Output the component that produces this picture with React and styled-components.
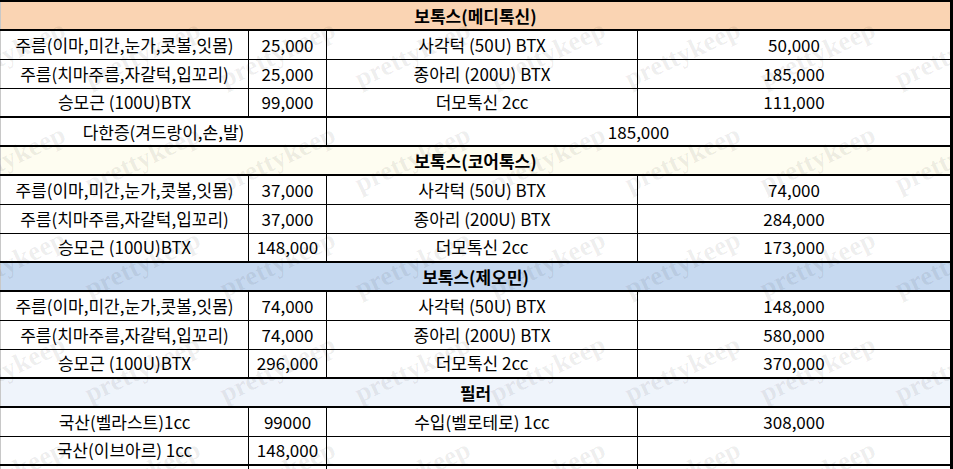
import styled, { createGlobalStyle } from "styled-components";

const GlobalStyle = createGlobalStyle`
  html, body { margin: 0; padding: 0; background: #fff; }
  body { font-family: "Noto Sans CJK KR", "Noto Sans", sans-serif; }
`;

const sections = [
  {
    title: "보톡스(메디톡신)",
    bg: "#fad4b3",
    rows: [
      ["주름(이마,미간,눈가,콧볼,잇몸)", "25,000", "사각턱 (50U) BTX", "50,000"],
      ["주름(치마주름,자갈턱,입꼬리)", "25,000", "종아리 (200U) BTX", "185,000"],
      ["승모근 (100U)BTX", "99,000", "더모톡신 2cc", "111,000"],
    ],
    extra: ["다한증(겨드랑이,손,발)", "185,000"],
  },
  {
    title: "보톡스(코어톡스)",
    bg: "#fefdf1",
    rows: [
      ["주름(이마,미간,눈가,콧볼,잇몸)", "37,000", "사각턱 (50U) BTX", "74,000"],
      ["주름(치마주름,자갈턱,입꼬리)", "37,000", "종아리 (200U) BTX", "284,000"],
      ["승모근 (100U)BTX", "148,000", "더모톡신 2cc", "173,000"],
    ],
  },
  {
    title: "보톡스(제오민)",
    bg: "#c6d9f0",
    rows: [
      ["주름(이마,미간,눈가,콧볼,잇몸)", "74,000", "사각턱 (50U) BTX", "148,000"],
      ["주름(치마주름,자갈턱,입꼬리)", "74,000", "종아리 (200U) BTX", "580,000"],
      ["승모근 (100U)BTX", "296,000", "더모톡신 2cc", "370,000"],
    ],
  },
  {
    title: "필러",
    bg: "#eff4fb",
    rows: [
      ["국산(벨라스트)1cc", "99000", "수입(벨로테로) 1cc", "308,000"],
      ["국산(이브아르) 1cc", "148,000", "", ""],
    ],
  },
];

// watermark grid: 135px across, 105px down
const marks = [];
for (let j = 0; j < 5; j++) {
  for (let i = -1; i < 8; i++) {
    marks.push({ x: i * 135 + 90, y: j * 105 + 88 });
  }
}

const Page = styled.div`
  position: relative;
  width: 953px;
  height: 469px;
  overflow: hidden;
  background: #fff;
`;

const Sheet = styled.table`
  border-collapse: collapse;
  table-layout: fixed;
  width: 951px;
  font-size: 17px;
  color: #000;
  border-top: 2px solid #000;
  border-left: 1px solid #c8c8c8;
  border-right: 3px solid #000;
`;

const Row = styled.tr`
  height: 29px;
`;

const Cell = styled.td`
  padding: 0;
  line-height: 20px;
  text-align: center;
  vertical-align: middle;
  white-space: nowrap;
  overflow: hidden;
  border-left: 1px solid #000;
  border-bottom: ${(p) => (p.$thick ? "2px" : "1px")} solid #000;
  &:first-child {
    border-left-color: #c8c8c8;
  }
`;

const HeadCell = styled(Cell)`
  font-weight: bold;
  background: ${(p) => p.$bg};
  border-bottom-width: 2px;
`;

const Watermark = styled.svg`
  position: absolute;
  inset: 0;
  width: 100%;
  height: 100%;
  pointer-events: none;
`;

export default function App() {
  return (
    <Page>
      <GlobalStyle />
      <Sheet>
        <colgroup>
          <col style={{ width: 248 }} />
          <col style={{ width: 78 }} />
          <col style={{ width: 311 }} />
          <col style={{ width: 314 }} />
        </colgroup>
        <tbody>
          {sections.map((s) => (
            <SectionRows key={s.title} section={s} />
          ))}
          <Row>
            <Cell />
            <Cell />
            <Cell />
            <Cell />
          </Row>
        </tbody>
      </Sheet>
      <Watermark>
        {marks.map((m, k) => (
          <text
            key={k}
            x={m.x}
            y={m.y}
            transform={`rotate(-25 ${m.x} ${m.y})`}
            fontFamily="'Liberation Serif', serif"
            fontWeight="bold"
            fontSize="27"
            fill="#000"
            fillOpacity="0.07"
          >
            prettykeep
          </text>
        ))}
      </Watermark>
    </Page>
  );
}

function SectionRows({ section }) {
  const last = section.rows.length - 1;
  return (
    <>
      <Row>
        <HeadCell colSpan={4} $bg={section.bg}>
          {section.title}
        </HeadCell>
      </Row>
      {section.rows.map((r, i) => (
        <Row key={i}>
          {r.map((c, k) => (
            <Cell key={k} $thick={i === last}>
              {c}
            </Cell>
          ))}
        </Row>
      ))}
      {section.extra && (
        <Row>
          <Cell colSpan={2} $thick>
            {section.extra[0]}
          </Cell>
          <Cell colSpan={2} $thick>
            {section.extra[1]}
          </Cell>
        </Row>
      )}
    </>
  );
}
